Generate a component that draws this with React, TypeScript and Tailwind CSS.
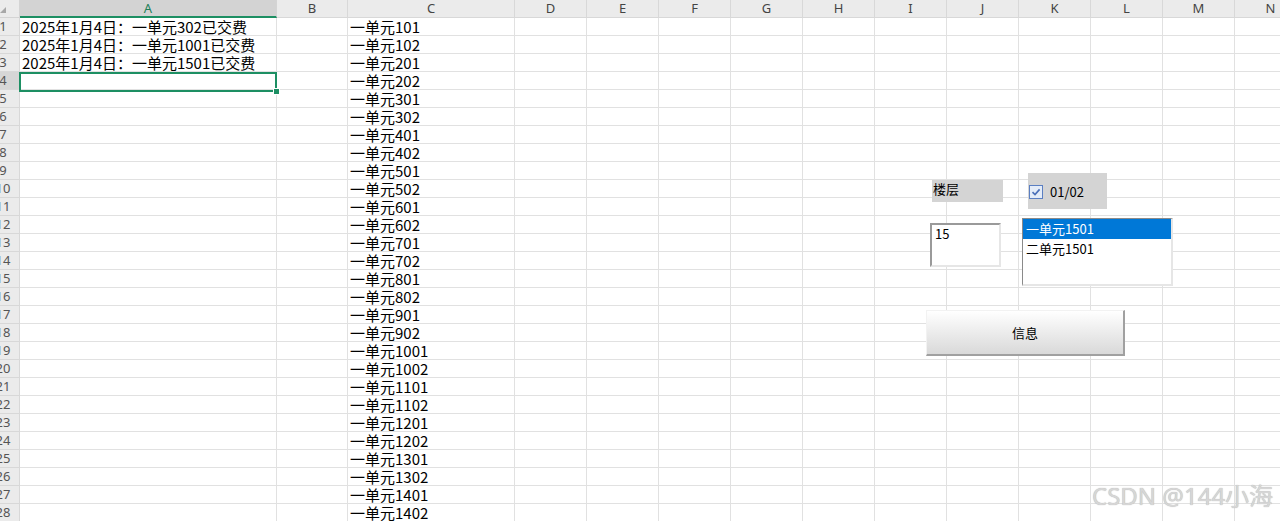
import React from "react";

const cols: { l: string; w: string }[] = [
  { l: "A", w: "w-[257px]" },
  { l: "B", w: "w-[71px]" },
  { l: "C", w: "w-[167px]" },
  { l: "D", w: "w-[72px]" },
  { l: "E", w: "w-[72px]" },
  { l: "F", w: "w-[72px]" },
  { l: "G", w: "w-[72px]" },
  { l: "H", w: "w-[72px]" },
  { l: "I", w: "w-[72px]" },
  { l: "J", w: "w-[72px]" },
  { l: "K", w: "w-[72px]" },
  { l: "L", w: "w-[72px]" },
  { l: "M", w: "w-[72px]" },
  { l: "N", w: "w-[72px]" },
];

const aText = [
  "2025年1月4日：一单元302已交费",
  "2025年1月4日：一单元1001已交费",
  "2025年1月4日：一单元1501已交费",
];

const cText: string[] = [];
for (let f = 1; f <= 14; f++) {
  cText.push(`一单元${f}01`);
  cText.push(`一单元${f}02`);
}

const cellFont = { fontFamily: '"Noto Sans CJK SC", sans-serif' };
const uiFont = { fontFamily: '"Noto Sans", "Noto Sans CJK SC", sans-serif' };

export default function App() {
  return (
    <div className="relative w-[1280px] h-[521px] overflow-hidden bg-white">
      {/* header row */}
      <div className="flex h-[18px]" style={uiFont}>
        <div className="shrink-0 w-[20px] h-[18px] bg-[#ebebeb] border-r border-b border-[#d4d4d4] relative">
          <svg className="absolute left-0 top-0" width="19" height="17" viewBox="0 0 19 17">
            <polygon points="0,13 6,13 6,7" fill="#a8a8a8" />
          </svg>
        </div>
        {cols.map((c) =>
          c.l === "A" ? (
            <div
              key={c.l}
              className={`shrink-0 ${c.w} h-[18px] bg-[#d3d3d3] border-r border-[#d4d4d4] border-b-2 border-b-[#1d8f63] flex items-center justify-center text-[13px] text-[#1d7f58] leading-none`}
            >
              {c.l}
            </div>
          ) : (
            <div
              key={c.l}
              className={`shrink-0 ${c.w} h-[18px] bg-[#ebebeb] border-r border-b border-[#d8d8d8] flex items-center justify-center text-[13px] text-[#444] leading-none`}
            >
              {c.l}
            </div>
          )
        )}
      </div>
      {/* data rows */}
      {cText.map((ct, i) => (
        <div key={i} className="flex h-[18px]">
          <div
            className={`shrink-0 w-[20px] h-[18px] overflow-hidden border-r border-b border-[#d8d8d8] ${
              i === 3 ? "bg-[#d6d6d6]" : "bg-[#ebebeb]"
            }`}
            style={uiFont}
          >
            <div className="ml-[-13px] w-[32px] text-center text-[13px] leading-[17px] text-[#555]">{i + 1}</div>
          </div>
          {cols.map((c) => (
            <div
              key={c.l}
              className={`shrink-0 ${c.w} h-[18px] border-r border-b border-[#e1e1e1] pl-[2px] text-[15px] leading-[18px] text-black whitespace-nowrap overflow-visible`}
              style={cellFont}
            >
              {c.l === "A" && i < 3 ? aText[i] : c.l === "C" ? ct : ""}
            </div>
          ))}
        </div>
      ))}

      {/* active cell selection */}
      <div className="absolute left-[19px] top-[72px] w-[258px] h-[20px] border-2 border-[#1d8f63]">
        <div className="absolute right-[-5px] bottom-[-5px] w-[7px] h-[7px] bg-[#1d8f63] border border-white" />
      </div>

      {/* label 楼层 */}
      <div
        className="absolute left-[932px] top-[180px] w-[71px] h-[22px] bg-[#d4d4d4] pl-[1px] pt-[1px] text-[13px] leading-[15px] text-black"
        style={cellFont}
      >
        楼层
      </div>

      {/* checkbox */}
      <div
        className="absolute left-[1028px] top-[173px] w-[79px] h-[36px] bg-[#d4d4d4] flex items-center pl-[1px]"
        style={cellFont}
      >
        <div className="w-[14px] h-[14px] border border-[#5b7fc2] bg-[#e4ecf8] flex items-center justify-center mt-[1px]">
          <svg width="10" height="10" viewBox="0 0 10 10">
            <path d="M1.5 5.2 L4 7.6 L8.6 2.4" fill="none" stroke="#4a6fb8" strokeWidth="1.6" />
          </svg>
        </div>
        <span className="ml-[7px] text-[13px] leading-none text-black">01/02</span>
      </div>

      {/* text box */}
      <div
        className="absolute left-[930px] top-[223px] w-[71px] h-[44px] bg-white border-t-2 border-l-2 border-t-[#9a9a9a] border-l-[#9a9a9a] border-b-2 border-r-2 border-b-[#e6e6e6] border-r-[#e6e6e6] pl-[3px] pt-[1px] text-[13px] leading-[15px] text-black"
        style={cellFont}
      >
        15
      </div>

      {/* list box */}
      <div
        className="absolute left-[1022px] top-[218px] w-[151px] h-[68px] bg-white border-t border-l border-t-[#8a8a8a] border-l-[#8a8a8a] border-b-2 border-r-2 border-b-[#e6e6e6] border-r-[#e6e6e6] text-[13px] text-black"
        style={cellFont}
      >
        <div className="h-[20px] bg-[#0078d7] text-white pl-[3px] leading-[20px]">一单元1501</div>
        <div className="h-[20px] pl-[3px] leading-[20px]">二单元1501</div>
      </div>

      {/* button */}
      <div
        className="absolute left-[926px] top-[310px] w-[199px] h-[46px] bg-gradient-to-b from-[#ffffff] to-[#d9d9d9] border-t border-l border-t-[#f2f2f2] border-l-[#f2f2f2] border-b-2 border-r-2 border-b-[#a0a0a0] border-r-[#a0a0a0] flex items-center justify-center text-[13px] text-black"
        style={cellFont}
      >
        信息
      </div>

      {/* watermark */}
      <div
        className="absolute left-[1092px] top-[480px] text-[24px] leading-[32px] text-[#d6d6d6] [text-shadow:0_0_1px_#a8a8a8] whitespace-nowrap"
        style={{ fontFamily: '"Noto Sans", "Noto Sans CJK SC", sans-serif' }}
      >
        CSDN @144小海
      </div>
    </div>
  );
}
